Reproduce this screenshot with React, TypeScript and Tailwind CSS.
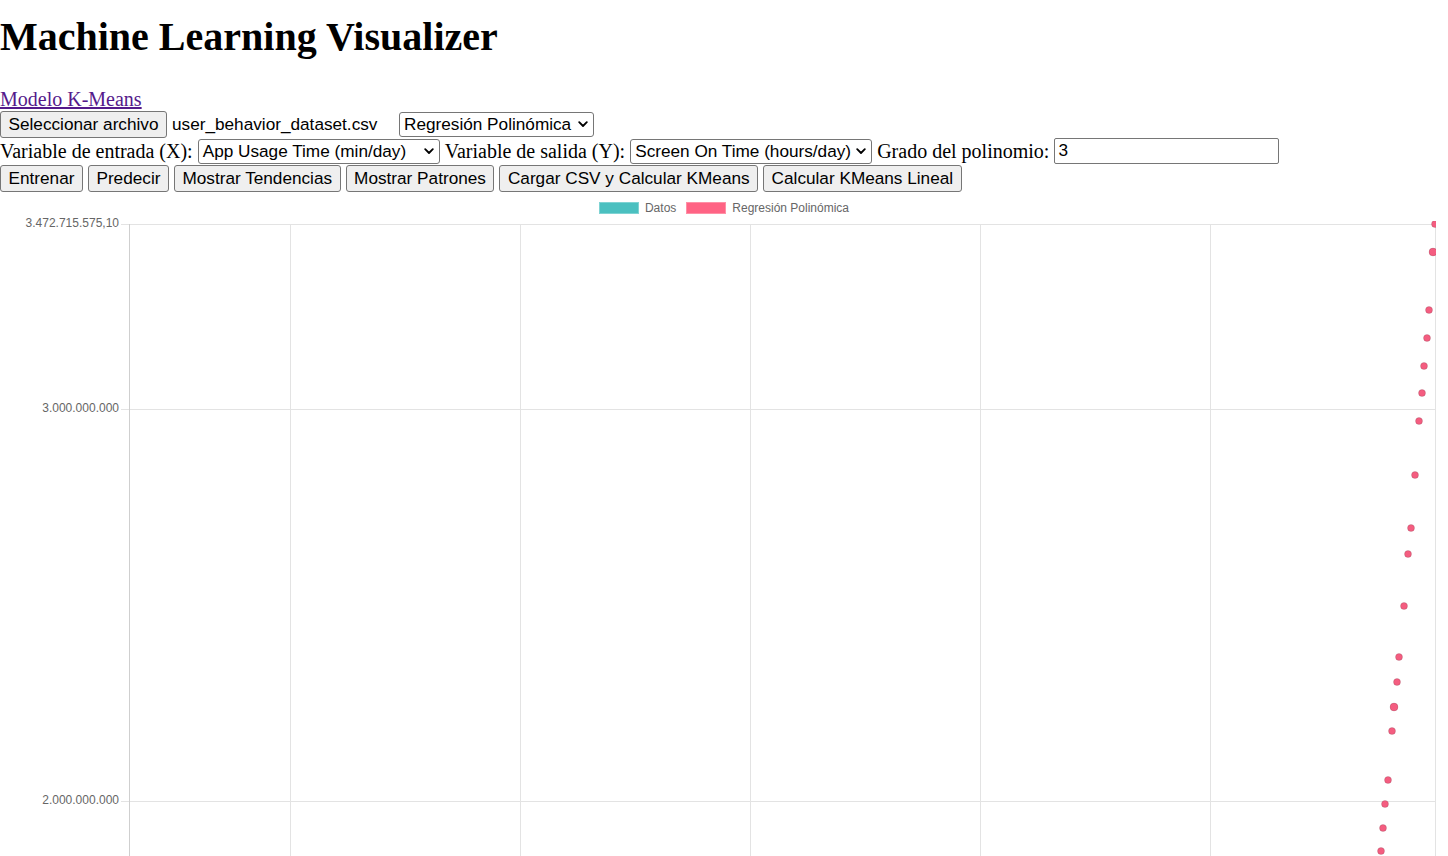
import React from "react";

const serif = { fontFamily: '"Liberation Serif", "Times New Roman", serif' };
const sans = { fontFamily: '"Liberation Sans", Arial, sans-serif' };

function Chevron() {
  return (
    <svg width="10" height="7" viewBox="0 0 10 7" className="shrink-0">
      <polyline points="1.2,1.2 5,5 8.8,1.2" fill="none" stroke="#000" strokeWidth="1.8" strokeLinecap="round" strokeLinejoin="round" />
    </svg>
  );
}

function FakeSelect({ label, width, height }: { label: string; width: string; height: string }) {
  return (
    <div
      className={`inline-flex items-center justify-between border border-[#767676] rounded-[3px] bg-white pl-[4px] pr-[5px] text-[17.2px] leading-none text-black ${width} ${height}`}
      style={sans}
    >
      <span className="whitespace-nowrap">{label}</span>
      <Chevron />
    </div>
  );
}

function Btn({ children }: { children: React.ReactNode }) {
  return (
    <button
      className="h-[27px] px-[7.5px] border border-[#767676] rounded-[3px] bg-[#efefef] text-[17.2px] leading-none text-black whitespace-nowrap"
      style={sans}
    >
      {children}
    </button>
  );
}

const pts: [number, number, number][] = [
  [1435, 224, 3.5],
  [1433, 252, 4],
  [1429, 310, 3.5],
  [1427, 338, 3.5],
  [1424, 366, 3.5],
  [1422, 393, 3.5],
  [1419, 421, 3.5],
  [1415, 475, 3.5],
  [1411, 528, 3.5],
  [1408, 554, 3.5],
  [1404, 606, 3.5],
  [1399, 657, 3.5],
  [1397, 682, 3.5],
  [1394, 707, 4],
  [1392, 731, 3.5],
  [1388, 780, 3.5],
  [1385, 804, 3.5],
  [1383, 828, 3.5],
  [1381, 851, 3.5],
];

function Chart() {
  const top = 214;
  const hLines = [224, 409, 801];
  const vLines = [290, 520, 750, 980, 1210, 1435];
  const labels: [number, string][] = [
    [224, "3.472.715.575,10"],
    [409, "3.000.000.000"],
    [801, "2.000.000.000"],
  ];
  return (
    <svg width="1448" height="642" className="block">
      <defs>
        <clipPath id="area">
          <rect x="0" y={221 - top} width="1436" height="700" />
        </clipPath>
      </defs>
      {hLines.map((y) => (
        <line key={y} x1="121" x2="1435" y1={y - top + 0.5} y2={y - top + 0.5} stroke="#e3e3e3" strokeWidth="1" />
      ))}
      {vLines.map((x) => (
        <line key={x} x1={x + 0.5} x2={x + 0.5} y1={224 - top} y2="642" stroke="#e3e3e3" strokeWidth="1" />
      ))}
      <line x1="129.5" x2="129.5" y1={224 - top} y2="642" stroke="#cfcfcf" strokeWidth="1" />
      {labels.map(([y, t]) => (
        <text
          key={t}
          x="119"
          y={y - top}
          textAnchor="end"
          dominantBaseline="middle"
          fontSize="12"
          fill="#666"
          style={sans}
        >
          {t}
        </text>
      ))}
      <g clipPath="url(#area)">
        {pts.map(([x, y, r], i) => (
          <circle key={i} cx={x} cy={y - top} r={r} fill="#f45d80" stroke="rgba(0,0,0,0.12)" strokeWidth="1" />
        ))}
      </g>
    </svg>
  );
}

export default function App() {
  return (
    <div className="w-[1448px] h-[856px] overflow-hidden bg-white text-black" style={serif}>
      <h1 className="mt-[14px] mb-0 text-[40px] leading-[46px] font-bold whitespace-nowrap" style={serif}>
        Machine Learning Visualizer
      </h1>
      <div className="mt-[28px] h-[23px] text-[20px] leading-[23px]">
        <a href="#" className="text-[#551a8b] underline">
          Modelo K-Means
        </a>
      </div>
      <div className="flex items-center h-[27px]">
        <Btn>Seleccionar archivo</Btn>
        <span className="ml-[5px] w-[227px] text-[17.2px] whitespace-nowrap" style={sans}>
          user_behavior_dataset.csv
        </span>
        <FakeSelect label="Regresión Polinómica" width="w-[195px]" height="h-[25px]" />
      </div>
      <div className="flex items-start h-[27px] text-[20px] leading-[26px] whitespace-nowrap">
        <span>Variable de entrada (X):</span>
        <span className="ml-[5px] mt-[1px] flex">
          <FakeSelect label="App Usage Time (min/day)" width="w-[242px]" height="h-[25px]" />
        </span>
        <span className="ml-[5px]">Variable de salida (Y):</span>
        <span className="ml-[5px] mt-[1px] flex">
          <FakeSelect label="Screen On Time (hours/day)" width="w-[242px]" height="h-[25px]" />
        </span>
        <span className="ml-[5px]">Grado del polinomio:</span>
        <div
          className="ml-[5px] w-[225px] h-[26px] border border-[#767676] rounded-[2px] flex items-center pl-[3px] text-[17.2px] leading-none"
          style={sans}
        >
          3
        </div>
      </div>
      <div className="flex items-center gap-[5px] h-[27px]">
        <Btn>Entrenar</Btn>
        <Btn>Predecir</Btn>
        <Btn>Mostrar Tendencias</Btn>
        <Btn>Mostrar Patrones</Btn>
        <Btn>Cargar CSV y Calcular KMeans</Btn>
        <Btn>Calcular KMeans Lineal</Btn>
      </div>
      <div className="mt-[10px] h-[12px] flex justify-center items-center text-[12px] text-[#666]" style={sans}>
        <span className="w-[40px] h-[12px] bg-[#4bc0c0] border border-[#7fd3d3]" />
        <span className="ml-[6px] leading-none">Datos</span>
        <span className="ml-[10px] w-[40px] h-[12px] bg-[#ff6384] border border-[#ff90a6]" />
        <span className="ml-[6px] leading-none">Regresión Polinómica</span>
      </div>
      <Chart />
    </div>
  );
}
